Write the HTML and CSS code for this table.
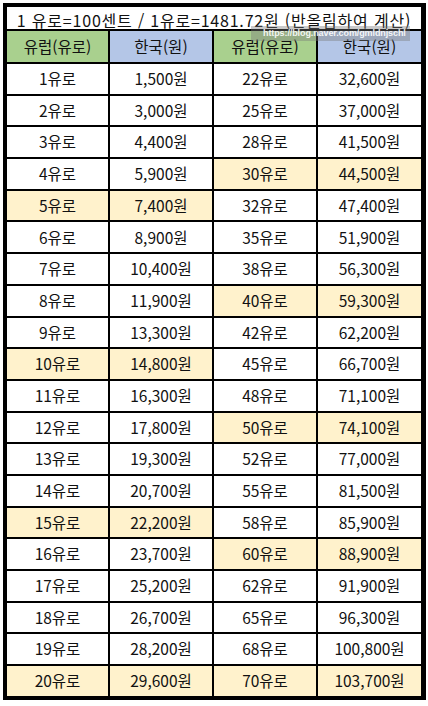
FILE: index.html
```html
<!DOCTYPE html>
<html lang="ko">
<head>
<meta charset="utf-8">
<link rel="stylesheet" href="styles.css">
</head>
<body>
<div class="sheet">
  <div class="grid">
    <div class="cell title">1 유로=100센트 / 1유로=1481.72원 (반올림하여 계산)</div>
    <div class="cell green">유럽(유로)</div>
    <div class="cell blue">한국(원)</div>
    <div class="cell green">유럽(유로)</div>
    <div class="cell blue">한국(원)</div>

    <div class="cell">1유로</div><div class="cell">1,500원</div><div class="cell">22유로</div><div class="cell">32,600원</div>
    <div class="cell">2유로</div><div class="cell">3,000원</div><div class="cell">25유로</div><div class="cell">37,000원</div>
    <div class="cell">3유로</div><div class="cell">4,400원</div><div class="cell">28유로</div><div class="cell">41,500원</div>
    <div class="cell">4유로</div><div class="cell">5,900원</div><div class="cell hl">30유로</div><div class="cell hl">44,500원</div>
    <div class="cell hl">5유로</div><div class="cell hl">7,400원</div><div class="cell">32유로</div><div class="cell">47,400원</div>
    <div class="cell">6유로</div><div class="cell">8,900원</div><div class="cell">35유로</div><div class="cell">51,900원</div>
    <div class="cell">7유로</div><div class="cell">10,400원</div><div class="cell">38유로</div><div class="cell">56,300원</div>
    <div class="cell">8유로</div><div class="cell">11,900원</div><div class="cell hl">40유로</div><div class="cell hl">59,300원</div>
    <div class="cell">9유로</div><div class="cell">13,300원</div><div class="cell">42유로</div><div class="cell">62,200원</div>
    <div class="cell hl">10유로</div><div class="cell hl">14,800원</div><div class="cell">45유로</div><div class="cell">66,700원</div>
    <div class="cell">11유로</div><div class="cell">16,300원</div><div class="cell">48유로</div><div class="cell">71,100원</div>
    <div class="cell">12유로</div><div class="cell">17,800원</div><div class="cell hl">50유로</div><div class="cell hl">74,100원</div>
    <div class="cell">13유로</div><div class="cell">19,300원</div><div class="cell">52유로</div><div class="cell">77,000원</div>
    <div class="cell">14유로</div><div class="cell">20,700원</div><div class="cell">55유로</div><div class="cell">81,500원</div>
    <div class="cell hl">15유로</div><div class="cell hl">22,200원</div><div class="cell">58유로</div><div class="cell">85,900원</div>
    <div class="cell">16유로</div><div class="cell">23,700원</div><div class="cell hl">60유로</div><div class="cell hl">88,900원</div>
    <div class="cell">17유로</div><div class="cell">25,200원</div><div class="cell">62유로</div><div class="cell">91,900원</div>
    <div class="cell">18유로</div><div class="cell">26,700원</div><div class="cell">65유로</div><div class="cell">96,300원</div>
    <div class="cell">19유로</div><div class="cell">28,200원</div><div class="cell">68유로</div><div class="cell">100,800원</div>
    <div class="cell hl">20유로</div><div class="cell hl">29,600원</div><div class="cell hl">70유로</div><div class="cell hl">103,700원</div>
  </div>
  <div class="watermark">https://blog.naver.com/gmldnjschl</div>
</div>
</body>
</html>
```
FILE: styles.css
```css
html, body {
  margin: 0;
  padding: 0;
  background: #ffffff;
}
body {
  padding: 3px 0 0 3px;
  font-family: "Noto Sans CJK KR", "Noto Sans", sans-serif;
  color: #111111;
}
.sheet {
  position: relative;
  width: 423px;
}
.grid {
  display: grid;
  grid-template-columns: 101px 102px 102px 103px;
  grid-template-rows: 22px 31px repeat(20, 29.7px);
  gap: 2px;
  background: #000000;
  padding: 4px;
  box-sizing: border-box;
  width: 423px;
}
.cell {
  background: #ffffff;
  display: flex;
  align-items: center;
  justify-content: center;
  font-size: 15.5px;
  line-height: 1;
  white-space: nowrap;
  letter-spacing: 0;
}
.title {
  grid-column: 1 / span 4;
  font-size: 16px;
  letter-spacing: 0.8px;
  padding-top: 3px;
  box-sizing: border-box;
}
.green { background: #a9d08e; }
.blue { background: #b4c6e7; }
.hl { background: #fff2cc; }
.watermark {
  position: absolute;
  left: 248px;
  top: 23px;
  height: 15px;
  background: rgba(120, 120, 120, 0.4);
  color: rgba(255, 255, 255, 0.9);
  font-family: "Liberation Sans", sans-serif;
  font-weight: bold;
  font-size: 9px;
  letter-spacing: -0.1px;
  line-height: 15px;
  padding: 0 4px 0 12px;
  white-space: nowrap;
}
```
